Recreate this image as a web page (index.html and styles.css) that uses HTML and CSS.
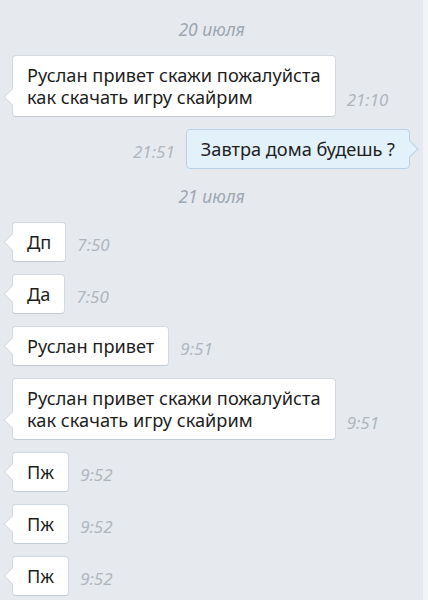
FILE: index.html
```html
<!DOCTYPE HTML>
<html>
	<head>
		<meta name="viewport" content="width=device-width">
		<meta charset="utf-8">
		<link rel="stylesheet" href="styles.css">
		<title>Диалог</title>
	</head>
	<body>
		<div class="chat">
			<div class="date">20 июля</div>

			<div class="msg in">
				<div class="bubble">Руслан привет скажи пожалуйста<br>как скачать игру скайрим</div>
				<span class="time">21:10</span>
			</div>

			<div class="msg out">
				<span class="time">21:51</span>
				<div class="bubble">Завтра дома будешь ?</div>
			</div>

			<div class="date">21 июля</div>

			<div class="msg in">
				<div class="bubble">Дп</div>
				<span class="time">7:50</span>
			</div>
			<div class="msg in">
				<div class="bubble">Да</div>
				<span class="time">7:50</span>
			</div>
			<div class="msg in">
				<div class="bubble">Руслан привет</div>
				<span class="time">9:51</span>
			</div>
			<div class="msg in">
				<div class="bubble">Руслан привет скажи пожалуйста<br>как скачать игру скайрим</div>
				<span class="time">9:51</span>
			</div>
			<div class="msg in">
				<div class="bubble">Пж</div>
				<span class="time">9:52</span>
			</div>
			<div class="msg in">
				<div class="bubble">Пж</div>
				<span class="time">9:52</span>
			</div>
			<div class="msg in">
				<div class="bubble">Пж</div>
				<span class="time">9:52</span>
			</div>
		</div>
	</body>
</html>
```

FILE: styles.css
```css
* {
	box-sizing: border-box;
}

html, body {
	margin: 0;
	height: 100%;
	background: #f2f4f7;
}

body {
	font-family: "Noto Sans", "Open Sans", sans-serif;
	color: #1e1e1e;
}

.chat {
	width: 423px;
	min-height: 100%;
	background: #e6eaef;
	padding: 15px 12px 0 12px;
	overflow: hidden;
}

.date {
	text-align: center;
	font-style: italic;
	font-size: 17.5px;
	line-height: 28px;
	color: #9ea6b1;
	margin-bottom: 12px;
}

.msg + .date {
	margin-top: 13px;
}

.msg {
	display: flex;
	align-items: flex-end;
	margin-bottom: 12px;
}

.msg.out {
	justify-content: flex-end;
	padding-right: 1px;
}

.bubble {
	position: relative;
	background: #fff;
	border: 1px solid #d3d9e0;
	border-bottom-color: #c4cbd3;
	border-radius: 4px;
	padding: 8px 14px;
	font-size: 18.2px;
	line-height: 22px;
	white-space: nowrap;
}

/* хвостик пузыря */
.bubble:before {
	content: "";
	position: absolute;
	width: 11px;
	height: 11px;
	bottom: 13px;
	left: -7px;
	background: #fff;
	border-left: 1px solid #d3d9e0;
	border-bottom: 1px solid #d3d9e0;
	transform: rotate(45deg);
}

.out .bubble {
	background: #e3f1fb;
	border-color: #b7d2e8;
}

.out .bubble:before {
	left: auto;
	right: -7px;
	background: #e3f1fb;
	border-left: none;
	border-bottom: none;
	border-right: 1px solid #b7d2e8;
	border-top: 1px solid #b7d2e8;
}

.time {
	font-style: italic;
	font-size: 17px;
	line-height: 20px;
	color: #b0b6be;
	margin: 0 11px 7px 11px;
}
```
